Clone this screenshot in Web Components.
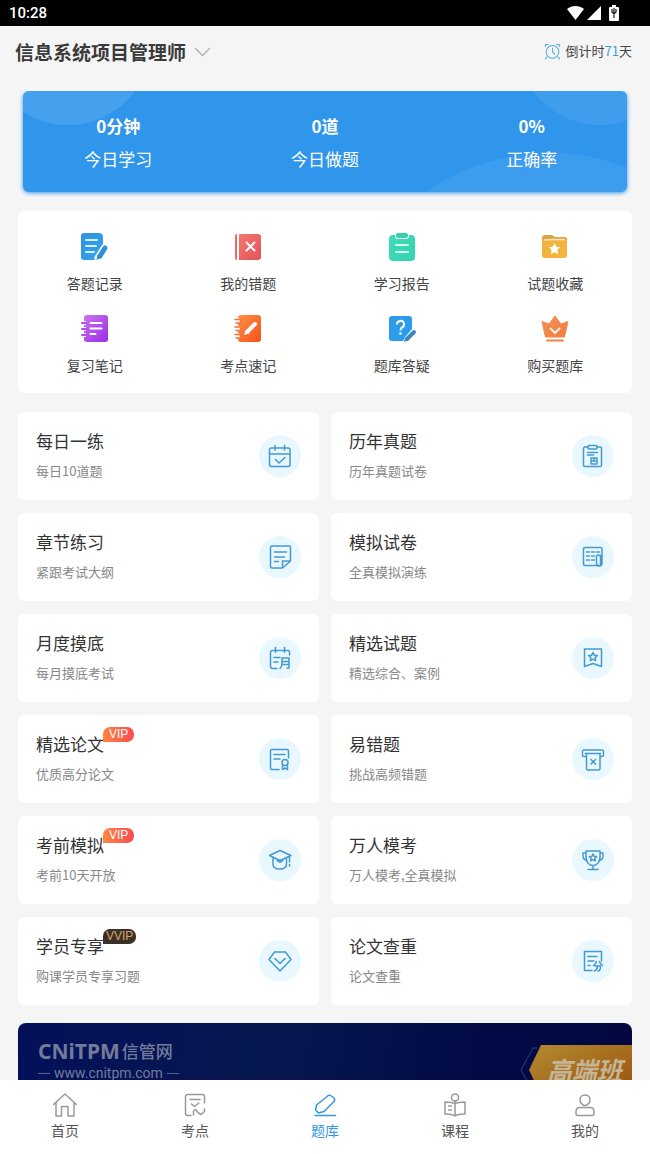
<!DOCTYPE html>
<html lang="zh-CN">
<head>
<meta charset="utf-8">
<meta name="viewport" content="width=device-width, initial-scale=1">
<title>题库</title>
<style>
  html, body { height: 100%; margin: 0; }
  body { background: #f5f5f5; color: #333; font-family: "Noto Sans CJK SC", "Noto Sans", sans-serif; }
</style>
</head>
<body>
<exam-app>
  <status-bar slot="top">10:28</status-bar>
  <subject-header slot="top" days="71">信息系统项目管理师</subject-header>

  <stats-card>
    <stat-item value="0分钟">今日学习</stat-item>
    <stat-item value="0道">今日做题</stat-item>
    <stat-item value="0%">正确率</stat-item>
  </stats-card>

  <quick-panel>
    <quick-link icon="record">答题记录</quick-link>
    <quick-link icon="wrong">我的错题</quick-link>
    <quick-link icon="report">学习报告</quick-link>
    <quick-link icon="favorite">试题收藏</quick-link>
    <quick-link icon="notes">复习笔记</quick-link>
    <quick-link icon="memo">考点速记</quick-link>
    <quick-link icon="ask">题库答疑</quick-link>
    <quick-link icon="crown">购买题库</quick-link>
  </quick-panel>

  <practice-grid>
    <practice-card icon="calendar">每日一练<span slot="sub">每日10道题</span></practice-card>
    <practice-card icon="clipboard">历年真题<span slot="sub">历年真题试卷</span></practice-card>
    <practice-card icon="page">章节练习<span slot="sub">紧跟考试大纲</span></practice-card>
    <practice-card icon="sheet">模拟试卷<span slot="sub">全真模拟演练</span></practice-card>
    <practice-card icon="month">月度摸底<span slot="sub">每月摸底考试</span></practice-card>
    <practice-card icon="bookmark">精选试题<span slot="sub">精选综合、案例</span></practice-card>
    <practice-card icon="paper">精选论文<vip-badge slot="badge">VIP</vip-badge><span slot="sub">优质高分论文</span></practice-card>
    <practice-card icon="printer">易错题<span slot="sub">挑战高频错题</span></practice-card>
    <practice-card icon="cap">考前模拟<vip-badge slot="badge">VIP</vip-badge><span slot="sub">考前10天开放</span></practice-card>
    <practice-card icon="trophy">万人模考<span slot="sub">万人模考,全真模拟</span></practice-card>
    <practice-card icon="diamond">学员专享<vip-badge slot="badge" dark>VVIP</vip-badge><span slot="sub">购课学员专享习题</span></practice-card>
    <practice-card icon="score">论文查重<span slot="sub">论文查重</span></practice-card>
  </practice-grid>

  <promo-banner><span slot="brand">CNiTPM</span><span slot="site">信管网</span><span slot="url">www.cnitpm.com</span>高端班</promo-banner>

  <tab-bar slot="bottom">
    <tab-item icon="home">首页</tab-item>
    <tab-item icon="points">考点</tab-item>
    <tab-item icon="pen" active>题库</tab-item>
    <tab-item icon="course">课程</tab-item>
    <tab-item icon="user">我的</tab-item>
  </tab-bar>
</exam-app>

<script>
const grad = (id, from, to) =>
  `<defs><linearGradient id="${id}" x1="0" y1="0" x2="1" y2="1"><stop stop-color="${from}"/><stop offset="1" stop-color="${to}"/></linearGradient></defs>`;

/* Filled icons, 28 x 28 */
const COLOR_ICONS = {
  record: grad('g', '#2b95e0', '#3aa2ee') +
    `<path fill="url(#g)" d="M3 0h15a4 4 0 0 1 4 4v9l-6 8-1 6H3a3 3 0 0 1-3-3V3a3 3 0 0 1 3-3z"/>
     <path d="M5 7h11M5 13h10M5 19h8" stroke="#d6efff" stroke-width="2" stroke-linecap="round"/>
     <path d="M24 14l-7 11" stroke="#fff" stroke-width="7" stroke-linecap="round"/>
     <path d="M24 15l-5 8" stroke="#2e8fdc" stroke-width="5" stroke-linecap="round"/><path d="M15.500 27l1-5.500 4.500 3z" fill="#2e8fdc"/>`,
  wrong: grad('g', '#f2776f', '#e45358') +
    `<path fill="#e9696a" d="M1 3a2 2 0 0 1 2-2v26a2 2 0 0 1-2-2z"/><path fill="url(#g)" d="M5 1h19a3 3 0 0 1 3 3v20a3 3 0 0 1-3 3H5z"/>
     <path d="M12.500 9.500l8 8m0-8l-8 8" stroke="#fff" stroke-width="2" stroke-linecap="round"/>`,
  report: grad('g', '#3edbb4', '#36d3b1') +
    `<rect x="1" y="2" width="26" height="26" rx="4" fill="url(#g)"/><rect x="7" y="-1" width="14" height="7" rx="3" fill="#fff"/><rect x="8" y="0" width="12" height="5" rx="2" fill="#35cfa9"/>
     <path d="M8 12h12M8 19h12" stroke="#d5fff3" stroke-width="2" stroke-linecap="round"/>`,
  favorite: grad('g', '#f0b13f', '#f5b43c') +
    `<path fill="#dda449" d="M4 2h7l3 2h10a2 2 0 0 1 2 2v5H1V5a3 3 0 0 1 3-3z"/><path fill="url(#g)" d="M1 7h25v15a3 3 0 0 1-3 3H4a3 3 0 0 1-3-3z"/>
     <path d="M3 7l10-.5h11" stroke="#ffe7b5" stroke-width="1.500"/>
     <path fill="#fff" d="M13.500 10l1.800 3.800 4 .5-3 2.800.8 4.100-3.600-2-3.600 2 .8-4.100-3-2.800 4-.5z"/>`,
  notes: grad('g', '#cb73f2', '#9b2be2') +
    `<rect x="3" y="0" width="24" height="27" rx="3" fill="url(#g)"/>
     <path d="M1 8h4M1 14h4M1 20h4" stroke="#fff" stroke-width="4"/><path d="M1 8h4M1 14h4M1 20h4" stroke="#b44ce9" stroke-width="2" stroke-linecap="round"/>
     <path d="M9.500 8h11M9.500 13.500h11M9.500 19h5" stroke="#fff" stroke-width="2" stroke-linecap="round"/>`,
  memo: grad('g', '#ff9142', '#f5511d') +
    `<rect x="4" y="0" width="23" height="27" rx="3" fill="url(#g)"/>
     <path d="M0 6h6M0 13.500h6M0 21h6" stroke="#fff" stroke-width="5"/>
     <path d="M1 4.500h4a1.500 1.500 0 0 1 0 3.500H2M1 12h4a1.500 1.500 0 0 1 0 3.500H2M1 19.500h4a1.500 1.500 0 0 1 0 3.500H2" fill="none" stroke="#f5733c" stroke-width="1.600" stroke-linecap="round"/>
     <path d="M21 9l-7 7" stroke="#fff" stroke-width="4" stroke-linecap="round"/><path d="M10 20l1.500-5 4 3.500z" fill="#fff"/>`,
  ask: grad('g', '#2f9be8', '#279ff0') +
    `<path fill="url(#g)" d="M4 1h17a3 3 0 0 1 3 3v10L15 26H4a3 3 0 0 1-3-3V4a3 3 0 0 1 3-3z"/>
     <path d="M9 9.500a3.500 3.500 0 1 1 5 3c-1.300.7-1.500 1.500-1.500 3" fill="none" stroke="#fff" stroke-width="2"/><circle cx="12.500" cy="18.500" r="1.300" fill="#fff"/>
     <path d="M25.500 17l-7 8" stroke="#fff" stroke-width="6"/><path d="M26 17l-7 7" stroke="#3b86c4" stroke-width="4" stroke-linecap="round"/><path d="M16 27l1.500-4.500 3 3z" fill="#3b86c4"/>`,
  crown: grad('g', '#f3935c', '#f37a3a') +
    `<path fill="url(#g)" d="M1 6.500l7 2.500 6-8 6 8 7-2.500L23.500 22h-19z" stroke="#f08a52" stroke-linejoin="round"/>
     <path d="M9.500 13.500l4.500 4.500 4.500-4.500" fill="none" stroke="#fff0e6" stroke-width="2" stroke-linecap="round"/><path d="M6 25.500h16" stroke="#f28347" stroke-width="2" stroke-linecap="round"/>`
};

/* Outline icons, 24 x 24 */
const LINE_ICONS = {
  calendar: `<rect x="1.500" y="4" width="20.500" height="18.500" rx="2"/><path d="M1.500 10h20.500M7 1.500v4.500M16.500 1.500v4.500M7.500 15.500l3.500 3.500 6-5.500"/>`,
  clipboard: `<path d="M7 3H4a1.500 1.500 0 0 0-1.500 1.500V21A1.500 1.500 0 0 0 4 22.500h15a1.500 1.500 0 0 0 1.500-1.500V4.500A1.500 1.500 0 0 0 19 3h-3"/><rect x="7" y="1.500" width="9" height="3.500" rx="1"/><path d="M6.500 8.500h10M6.500 11h6M10 14h6v6h-6zM10 17h6M13 14v3"/>`,
  page: `<path d="M14.500 23H4a1.500 1.500 0 0 1-1.500-1.500v-19A1.500 1.500 0 0 1 4 1h17a1.500 1.500 0 0 1 1.500 1.500V16zM14.500 23v-7h8M6.500 7h12M6.500 12h10M6.500 16.500h4"/>`,
  sheet: `<path d="M21 10V4a1.500 1.500 0 0 0-1.500-1.500H4A1.500 1.500 0 0 0 2.500 4v15A1.500 1.500 0 0 0 4 20.500h14"/><path d="M5.500 7h3M10.500 7h3M15.500 7h3M5.500 11h3M10.500 11h3M5.500 15h3M10.500 15h3"/><path d="M15.500 12a2 2 0 0 1 4 0v9h-2l-2-2zM19.500 10.500H21v8a2 2 0 0 1-2 2"/>`,
  month: `<path d="M9 22.500H4.500A2 2 0 0 1 2.500 20.500v-14a2 2 0 0 1 2-2H20a1.500 1.500 0 0 1 1.500 1.500v3M7.500 1.500v5M16.500 1.500v5M6 11.500h6M6 16h4"/><path d="M14 12h7v10h-2M14 12v5c0 3-.5 4-2 5.500M14 15.500h7M14 18.500h7"/>`,
  bookmark: `<path d="M3.500 3h17v17.500l-8.500-3-8.500 3z"/><path d="M12 6.500l1.300 2.700 3 .4-2.200 2 .6 3-2.700-1.400-2.700 1.400.6-3-2.200-2 3-.4z"/>`,
  paper: `<path d="M11 22.500H4A1.500 1.500 0 0 1 2.500 21V4A1.500 1.500 0 0 1 4 2.500h15A1.500 1.500 0 0 1 20.500 4v7M6 7.500h11M6 12h6"/><circle cx="17" cy="15.500" r="3"/><path d="M14.500 18v4.500l2.500-1.500 2.500 1.500V18"/>`,
  printer: `<path d="M5 9.500H3A1.500 1.500 0 0 1 1.500 8V4.500A1.500 1.500 0 0 1 3 3h18a1.500 1.500 0 0 1 1.500 1.500V8A1.500 1.500 0 0 1 21 9.500h-2M4.500 6.500h15M5.500 6.500v15A1.500 1.500 0 0 0 7 23h10.500a1.500 1.500 0 0 0 1.500-1.500v-15M10 12.500l4.500 4.500m0-4.500L10 17"/>`,
  cap: `<path d="M1.500 7.500L12 2.500l11 5-11 5zM5 10v6c0 3.500 3 5 6.500 5s7-1.500 7-5v-6M21.500 9v5M21.500 16.500v1.500M9 12.500l3 2 3-2"/>`,
  trophy: `<path d="M5 3h14v6c0 5-3 8.500-7 8.500S5 14 5 9zM5 5H2c-.5 4 1 7 4 7.500M19 5h3c.5 4-1 7-4 7.500M12 17.500v4M7 21.500h10"/><path d="M12 6l1.100 2.300 2.500.3-1.800 1.700.5 2.500-2.300-1.200-2.300 1.200.5-2.500-1.800-1.700 2.500-.3z"/>`,
  diamond: `<path d="M6.500 3h11l5.500 7.500L12 22 1 10.500zM7 9.500l5 5 5-5"/>`,
  score: `<path d="M11 21.500H3.500v-19h17V12M7 7.500h9M7 12h6M7 16.500h2"/><path d="M15.500 12.500c-.5 2-1.500 3-3 4M18.500 12.500c.5 2 1.500 3 3 4M14 17h5.500c0 3-.5 5-2.500 5M16.500 17c0 2.500-1 4-3 5"/>`,
  home: `<path d="M.5 11.500L12 1l11.500 10.500M3 9.500V23h5.500v-9.500h6.500V23H21V9.500"/>`,
  points: `<path d="M8 22.500H4.500a2 2 0 0 1-2-2v-17a2 2 0 0 1 2-2h15a2 2 0 0 1 2 2V10M7 6.500h10M8.500 11l3 2.500 4.500-3.500M10.500 22v-4l2-1.500 3 3.500 2.500 1.500 3.500-3v-2.500"/>`,
  pen: `<path d="M14 3.500a3 3 0 0 1 3.500-1l3 2a3 3 0 0 1 .5 4L11 18.500l-5.500 1.500L2.500 17l1-5z"/><path d="M2 22.500h20.500"/>`,
  course: `<circle cx="12" cy="4.500" r="3.500"/><path d="M12 11c-2.500-2-6-2-10-2v12c4 0 7.500 0 10 2 2.500-2 6-2 10-2V9c-4 0-7.500 0-10 2zM12 8v15M5.500 13h3M5.500 17h3"/>`,
  user: `<path d="M12 2c3 0 5 2 5 4.500S15 12.500 12 12.500 7 9 7 6.500 9 2 12 2zM7 14.500h10c2.500 0 4 2 4 4.500v1.500a2 2 0 0 1-2 2H5a2 2 0 0 1-2-2V19c0-2.500 1.500-4.500 4-4.500z"/>`,
  alarm: `<circle cx="12" cy="12.500" r="9"/><path d="M2 5V2h4M22 5V2h-4M12 7v6l3 2.500M4 20l-2 2.500M20 20l2 2.500"/>`
};

function define(name, render) {
  customElements.define(name, class extends HTMLElement {
    constructor() { super(); this.attachShadow({ mode: 'open' }); }
    connectedCallback() {
      const template = document.createElement('template');
      template.innerHTML = render(this);
      this.shadowRoot.replaceChildren(template.content.cloneNode(true));
    }
  });
}

define('app-icon', el => {
  const name = el.getAttribute('name');
  return name in COLOR_ICONS
    ? `<style>:host{display:block;width:28px;height:28px}svg{display:block;overflow:visible}</style><svg width="28" height="28" viewBox="0 0 28 28" fill="none" aria-hidden="true">${COLOR_ICONS[name]}</svg>`
    : `<style>:host{display:block;width:var(--icon-size,24px);height:var(--icon-size,24px)}svg{display:block;width:100%;height:100%}</style>
       <svg viewBox="0 0 24 24" fill="none" stroke="currentColor" stroke-width="1.500" stroke-linejoin="round" stroke-linecap="round" aria-hidden="true">${LINE_ICONS[name]}</svg>`;
});

define('exam-app', () => `
<style>
  :host { display: flex; flex-direction: column; height: 100vh; }
  main { flex: 1; min-height: 0; overflow-y: auto; scrollbar-width: none; }
</style>
<slot name="top"></slot>
<main><slot></slot></main>
<slot name="bottom"></slot>`);

define('status-bar', () => `
<style>
  :host { display: flex; align-items: center; justify-content: space-between; height: 26px; padding: 0 30px 0 9px;
    background: #000; color: #fff; font: 500 15px/26px Roboto, sans-serif; }
  div { display: flex; align-items: center; gap: 3px; }
</style>
<span><slot></slot></span>
<div aria-hidden="true">
  <svg width="17" height="16" viewBox="0 0 17 16"><path fill="#fff" d="M0 4c5-4 12-4 17 0L8.500 15z"/></svg>
  <svg width="14" height="16" viewBox="0 0 14 16"><path fill="#fff" d="M14 1v14H0z"/></svg>
  <svg width="16" height="16" viewBox="0 0 16 16"><path fill="#fff" d="M8 0h4v2h2a1 1 0 0 1 1 1v12a1 1 0 0 1-1 1H6a1 1 0 0 1-1-1V3a1 1 0 0 1 1-1h2z"/><path d="M8 4v3l2 2 2-2V4M10 3v10" fill="none" stroke="#222" stroke-width="1.300"/></svg>
</div>`);

define('subject-header', el => `
<style>
  :host { display: flex; align-items: center; justify-content: space-between; height: 52px; padding: 0 18px 0 15px; margin-bottom: 13px; }
  button { display: flex; align-items: center; gap: 8px; padding: 0; border: 0; background: none; color: #3a3a3a; font: inherit; font-size: 19px; font-weight: 700; line-height: 28px; }
  p { display: flex; align-items: center; gap: 5px; margin: 0; padding-bottom: 2px; font-size: 13px; line-height: 20px; color: #444; --icon-size: 17px; }
  app-icon { color: #58acdf; }
  b { font-weight: 400; color: #3e9fdb; }
</style>
<button type="button" aria-haspopup="listbox"><slot></slot>
  <svg width="17" height="10" viewBox="0 0 17 10" fill="none" stroke="#b5b5b5" stroke-width="1.500" aria-hidden="true"><path d="M1 1l7.500 7.500L16 1"/></svg>
</button>
<p><app-icon name="alarm"></app-icon><span>倒计时<b>${el.getAttribute('days')}</b>天</span></p>`);

define('stats-card', () => `
<style>
  :host { display: block; position: relative; margin: 0 23px 19px; border-radius: 6px; background: #3096ec; box-shadow: 0 1px 4px #3096ec; }
  svg { position: absolute; inset: 0; width: 100%; height: 100%; border-radius: 6px; }
  div { position: relative; display: grid; grid-template-columns: repeat(3, 1fr); margin: 0 -8px; padding: 23px 0 21px; }
</style>
<svg viewBox="0 0 604 101" preserveAspectRatio="none" fill="#fff" aria-hidden="true">
  <circle cx="45" cy="-49" r="83" fill-opacity=".1"/><circle cx="577" cy="-49" r="83" fill-opacity=".07"/><circle cx="527" cy="280" r="218" fill-opacity=".06"/>
</svg>
<div><slot></slot></div>`);

define('stat-item', el => `
<style>
  :host { display: flex; flex-direction: column; align-items: center; gap: 9px; color: #fff; font-size: 17px; line-height: 24px; }
</style>
<strong>${el.getAttribute('value')}</strong><span><slot></slot></span>`);

define('quick-panel', () => `
<style>
  :host { display: grid; grid-template-columns: repeat(4, 1fr); row-gap: 22px; margin: 0 18px 19px; padding: 22px 0 18px; border-radius: 6px; background: #fff; }
</style><slot></slot>`);

define('quick-link', el => `
<style>
  :host { display: block; }
  a { display: flex; flex-direction: column; align-items: center; gap: 12px; color: #444; text-decoration: none; font-size: 14px; line-height: 20px; }
</style>
<a href="#${el.getAttribute('icon')}"><app-icon name="${el.getAttribute('icon')}"></app-icon><span><slot></slot></span></a>`);

define('practice-grid', () => `
<style>
  :host { display: grid; grid-template-columns: 1fr 1fr; gap: 13px 12px; margin: 0 18px 18px; }
</style><slot></slot>`);

define('practice-card', el => `
<style>
  :host { display: block; }
  a { display: flex; align-items: center; justify-content: space-between; padding: 17px 18px; border-radius: 6px; background: #fff; color: #333; text-decoration: none; }
  .text { display: flex; flex-direction: column; gap: 8px; padding-bottom: 2px; }
  .title { display: flex; font-size: 17px; line-height: 24px; }
  .sub { font-size: 13px; line-height: 20px; color: #888; }
  .disc { display: grid; place-items: center; width: 42px; height: 42px; border-radius: 50%; background: #e9f7ff; color: #4499d0; }
</style>
<a href="#${el.getAttribute('icon')}">
  <span class="text"><span class="title"><slot></slot><slot name="badge"></slot></span><span class="sub"><slot name="sub"></slot></span></span>
  <span class="disc"><app-icon name="${el.getAttribute('icon')}"></app-icon></span>
</a>`);

define('vip-badge', () => `
<style>
  :host { display: block; align-self: flex-start; height: 15px; margin: -5px 0 0 -1px; padding: 0 6px; border-radius: 7px 7px 7px 0;
    background: linear-gradient(90deg, #ff8540, #f84c52); color: #fff; font: 12px/15px "Liberation Sans", sans-serif; }
  :host([dark]) { padding: 0 3px; background: #3a3028; color: #d5a567; }
</style><slot></slot>`);

define('promo-banner', () => `
<style>
  :host { display: flex; justify-content: space-between; height: 140px; margin: 0 18px 18px; border-radius: 8px; overflow: hidden;
    background: linear-gradient(100deg, #04105a, #06184f 40%, #020a46 75%, #03083e); }
  .left { padding: 14px 0 0 20px; color: #737b9b; }
  .brand { display: flex; align-items: center; gap: 2px; font: 700 21px/28px "Noto Sans", sans-serif; }
  .site { font: 500 17px/28px "Noto Sans CJK SC", sans-serif; }
  .url { display: flex; align-items: center; gap: 4px; font: 14px/16px Roboto, sans-serif; }
  .url::before, .url::after { content: ""; width: 12px; height: 1px; background: #59618a; }
  .course { position: relative; width: 112px; height: 50px; margin-top: 22px; }
  .course svg { position: absolute; inset: 0; }
  .course b { position: relative; display: block; padding-left: 27px; font-size: 25px; line-height: 48px; font-style: italic; color: #c5b596; white-space: nowrap; }
</style>
<div class="left"><div class="brand"><slot name="brand"></slot><span class="site"><slot name="site"></slot></span></div><div class="url"><slot name="url"></slot></div></div>
<div class="course">
  <svg width="112" height="50" viewBox="0 0 112 50" aria-hidden="true">${grad('gold', '#b28b2e', '#9b500f')}
    <path d="M17 3h-4L1 25l12 22h4" fill="none" stroke="#343e73"/><path d="M9 25L21 0h91v50H21z" fill="url(#gold)"/></svg>
  <b><slot></slot></b>
</div>`);

define('tab-bar', () => `
<style>
  :host { display: block; background: #fff; }
  nav { display: grid; grid-template-columns: repeat(5, 1fr); }
</style><nav><slot></slot></nav>`);

define('tab-item', el => `
<style>
  :host { display: block; }
  a { display: flex; flex-direction: column; align-items: center; gap: 3px; padding: 13px 0 14px; color: #555; text-decoration: none; font-size: 14px; line-height: 20px; }
  app-icon { color: #999; }
  :host([active]) a, :host([active]) app-icon { color: #3299e0; }
</style>
<a href="#${el.getAttribute('icon')}"${el.hasAttribute('active') ? ' aria-current="page"' : ''}><app-icon name="${el.getAttribute('icon')}"></app-icon><span><slot></slot></span></a>`);
</script>
</body>
</html>
